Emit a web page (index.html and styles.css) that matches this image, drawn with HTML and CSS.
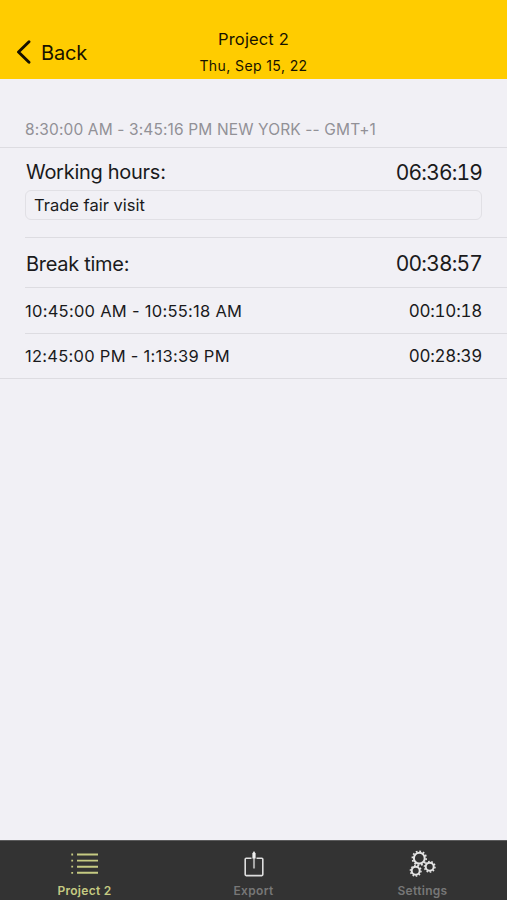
FILE: index.html
```html
<!DOCTYPE html>
<html lang="en">
<head>
<meta charset="UTF-8">
<meta name="viewport" content="width=device-width, initial-scale=1.0">
<title>Project 2</title>
<link rel="stylesheet" href="styles.css">
</head>
<body>
<header class="header">
    <a class="back" href="#">
        <svg class="chevron" width="16" height="26" viewBox="0 0 16 26"><path d="M14 2.8 L3.5 13 L14 23.2" fill="none" stroke="#151000" stroke-width="2.9" stroke-linecap="round" stroke-linejoin="round"/></svg>
        <span>Back</span>
    </a>
    <div class="title">
        <h1><span>Project 2</span></h1>
        <p><span>Thu, Sep 15, 22</span></p>
    </div>
</header>

<main class="content">
    <h2 class="section-title"><span>8:30:00 AM - 3:45:16 PM NEW YORK -- GMT+1</span></h2>
    <div class="list">
        <div class="row work">
            <div class="line">
                <span class="work-label">Working hours:</span>
                <span class="total">06:36:19</span>
            </div>
            <div class="note"><span>Trade fair visit</span></div>
        </div>
        <div class="row break">
            <span class="break-label">Break time:</span>
            <span class="total">00:38:57</span>
        </div>
        <div class="row entry">
            <span class="range">10:45:00 AM - 10:55:18 AM</span>
            <span class="duration">00:10:18</span>
        </div>
        <div class="row entry last">
            <span class="range">12:45:00 PM - 1:13:39 PM</span>
            <span class="duration">00:28:39</span>
        </div>
    </div>
</main>

<nav class="tabs">
    <a class="tab active" href="#">
        <svg width="30" height="28" viewBox="0 0 30 28" fill="none" stroke="#c5ca82">
            <path d="M7 4.5H28M7 10.6H28M7 16.7H28M7 22.8H28" stroke-width="1.9"/>
            <path d="M1.3 4.5H3.1M1.3 10.6H3.1M1.3 16.7H3.1M1.3 22.8H3.1" stroke-width="1.8"/>
        </svg>
        <span>Project 2</span>
    </a>
    <a class="tab" href="#">
        <svg width="30" height="28" viewBox="0 0 30 28" fill="none" stroke="#dedede">
            <path d="M12.5 8.3H7.2Q6.2 8.3 6.2 9.3V24.6Q6.2 25.6 7.2 25.6H22.8Q23.8 25.6 23.8 24.6V9.3Q23.8 8.3 22.8 8.3H17.5" stroke-width="1.6"/>
            <path d="M15 3V18.5" stroke="#a5a5a5" stroke-width="2.1"/>
            <path d="M15 1L16.6 3.5V8.5H13.4V3.5Z" fill="#eee" stroke="none"/>
        </svg>
        <span>Export</span>
    </a>
    <a class="tab" href="#">
        <svg width="30" height="28" viewBox="0 0 30 28" fill="none" stroke="#e4e4e4">
            <circle cx="11.3" cy="8.2" r="5.4" stroke-width="2"/>
            <circle cx="11.3" cy="8.2" r="6.9" stroke-width="1.7" pathLength="24" stroke-dasharray="1 1"/>
            <circle cx="21.7" cy="16.8" r="4" stroke-width="2"/>
            <circle cx="21.7" cy="16.8" r="5.3" stroke-width="1.5" pathLength="20" stroke-dasharray="1 1"/>
            <circle cx="7.7" cy="20.8" r="4" stroke-width="2"/>
            <circle cx="7.7" cy="20.8" r="5.3" stroke-width="1.5" pathLength="20" stroke-dasharray="1 1"/>
        </svg>
        <span>Settings</span>
    </a>
</nav>
</body>
</html>
```
FILE: styles.css
```css
* {
    box-sizing: border-box;
}
body {
    margin: 0;
    height: 900px;
    display: flex;
    flex-direction: column;
    background-color: #f1f0f5;
    color: #1a1a1c;
    font-family: Inter, "Liberation Sans", sans-serif;
    overflow: hidden;
}
h1, h2, p {
    margin: 0;
    font-weight: 400;
}
a {
    text-decoration: none;
}
.header {
    height: 79px;
    display: grid;
    grid-template-columns: 150px 1fr 150px;
    background-color: #fc0;
    color: #171200;
}
.back {
    display: flex;
    align-items: center;
    align-self: start;
    gap: 10px;
    margin-top: 39px;
    padding-left: 15px;
    height: 26px;
    color: #171200;
    font-size: 20px;
    letter-spacing: -0.2px;
}
.back span {
    padding-top: 1px;
}
.title {
    padding-top: 28px;
    text-align: center;
}
.title h1 {
    font-size: 16.5px;
    line-height: 22px;
    letter-spacing: 0.15px;
}
.title p {
    margin-top: 5px;
    font-size: 14px;
    line-height: 22px;
    letter-spacing: 0.4px;
}
.content {
    flex: 1;
}
.section-title {
    height: 69px;
    padding: 40px 25px 0;
    border-bottom: 1px solid #dddce1;
    color: #929197;
    font-size: 15.5px;
    line-height: 22px;
    letter-spacing: 0.13px;
}
.list {
    padding-left: 25px;
    border-bottom: 1px solid #dddce1;
}
.row {
    padding-right: 25px;
    border-bottom: 1px solid #dddce1;
}
.line, .break, .entry {
    display: flex;
    align-items: center;
    justify-content: space-between;
}
.work {
    height: 90px;
    padding-top: 10px;
}
.line {
    height: 28px;
}
.work-label, .break-label {
    padding-left: 1px;
    font-size: 20px;
    letter-spacing: -0.28px;
}
.total {
    font-size: 21px;
    letter-spacing: -0.85px;
    font-variant-numeric: tabular-nums;
}
.note {
    display: flex;
    align-items: center;
    height: 30px;
    margin-top: 4px;
    padding-left: 8px;
    border: 1px solid #e1e0e5;
    border-radius: 6px;
    font-size: 16.5px;
}
.break {
    height: 50px;
    padding-top: 2px;
}
.entry {
    height: 46px;
}
.last {
    height: 44px;
    border-bottom: none;
}
.range {
    font-size: 16.5px;
    letter-spacing: 0.27px;
}
.duration {
    font-size: 17px;
    letter-spacing: -0.25px;
    font-variant-numeric: tabular-nums;
}
.tabs {
    display: grid;
    grid-template-columns: repeat(3, 1fr);
    height: 60px;
    background-color: #333;
    border-top: 1px solid #5b5b5c;
}
.tab {
    display: flex;
    flex-direction: column;
    align-items: center;
    padding-top: 9px;
    color: #777;
    font-size: 12px;
    font-weight: 600;
    letter-spacing: 0.3px;
}
.tab span {
    margin-top: 5px;
    line-height: 16px;
}
.active {
    color: #c5ca82;
}
```
